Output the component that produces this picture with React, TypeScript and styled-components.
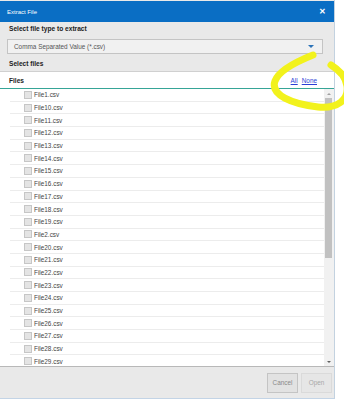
import styled, { createGlobalStyle } from "styled-components";

const GlobalStyle = createGlobalStyle`
  html, body {
    margin: 0;
    padding: 0;
    background: #ffffff;
  }
  body {
    font-family: "Liberation Sans", Arial, sans-serif;
  }
`;

const Page = styled.div`
  position: relative;
  width: 344px;
  height: 400px;
  overflow: hidden;
`;

const Dialog = styled.div`
  width: 334px;
  height: 398px;
  border-right: 1px solid #c3d2e0;
  border-bottom: 1px solid #c3d4e6;
  display: flex;
  flex-direction: column;
  background: #e9e9e9;
`;

const TitleBar = styled.div`
  height: 21px;
  margin-top: 1px;
  background: #0a6ec4;
  display: flex;
  align-items: center;
  justify-content: space-between;
  padding: 0 8px 0 7px;
  color: #ffffff;
`;

const Title = styled.span`
  font-size: 6px;
`;

const Close = styled.span`
  font-size: 8px;
  font-weight: bold;
`;

const Label = styled.div`
  height: 14px;
  line-height: 14px;
  padding-left: 9px;
  font-size: 6.6px;
  font-weight: bold;
  color: #222;
`;

const SelectBox = styled.div`
  height: 13px;
  margin: 3px 11px 3px 7px;
  border: 1px solid #c4c4c4;
  background: #f1f1f1;
  display: flex;
  align-items: center;
  justify-content: space-between;
  padding: 0 8px 0 6px;
  font-size: 6.4px;
  color: #555;
`;

const Caret = styled.span`
  width: 0;
  height: 0;
  border-left: 3px solid transparent;
  border-right: 3px solid transparent;
  border-top: 3px solid #2c73b8;
`;

const Panel = styled.div`
  flex: 1;
  display: flex;
  flex-direction: column;
  background: #ffffff;
  border-top: 1px solid #d0d0d0;
  border-bottom: 1px solid #b8b8b8;
  min-height: 0;
`;

const PanelHead = styled.div`
  height: 16px;
  display: flex;
  align-items: center;
  justify-content: space-between;
  padding: 0 17px 0 9px;
  border-bottom: 1px solid #36a597;
  font-size: 6.6px;
`;

const HeadTitle = styled.span`
  font-weight: bold;
  color: #222;
`;

const Links = styled.span`
  display: flex;
  gap: 4px;
`;

const Link = styled.a`
  color: #2a3fd6;
  text-decoration: underline;
  font-size: 6.4px;
`;

const ListArea = styled.div`
  flex: 1;
  display: flex;
  min-height: 0;
`;

const Rows = styled.div`
  flex: 1;
  overflow: hidden;
  padding-left: 10px;
`;

const Row = styled.div`
  height: 11.7px;
  border-bottom: 1px solid #ececec;
  display: flex;
  align-items: center;
  padding-left: 14px;
  gap: 2px;
  font-size: 6.4px;
  color: #444;
  &:last-child {
    border-bottom: none;
  }
`;

const Check = styled.span`
  width: 6px;
  height: 6px;
  border: 1px solid #c6c6c6;
  background: #e4e4e4;
`;

const Scrollbar = styled.div`
  width: 10px;
  display: flex;
  flex-direction: column;
  background: #f1f1f1;
`;

const Arrow = styled.div<{ $down?: boolean }>`
  height: 9px;
  display: flex;
  align-items: center;
  justify-content: center;
  &::after {
    content: "";
    border-left: 2px solid transparent;
    border-right: 2px solid transparent;
    ${(p) =>
      p.$down
        ? "border-top: 2px solid #606060;"
        : "border-bottom: 2px solid #a0a0a0;"}
  }
`;

const Track = styled.div`
  flex: 1;
  padding: 0 2px 0 1px;
`;

const Thumb = styled.div`
  height: 160px;
  background: #c1c1c1;
`;

const Footer = styled.div`
  height: 31px;
  display: flex;
  align-items: center;
  justify-content: flex-end;
  gap: 3px;
  padding-right: 2px;
`;

const Button = styled.button<{ $faded?: boolean }>`
  width: 31px;
  height: 20px;
  padding: 0;
  border: 1px solid ${(p) => (p.$faded ? "#dadada" : "#c4c4c4")};
  background: ${(p) => (p.$faded ? "#e6e6e6" : "#e2e2e2")};
  color: ${(p) => (p.$faded ? "#a8a8a8" : "#8a8a8a")};
  font-family: "Liberation Sans", Arial, sans-serif;
  font-size: 6.4px;
`;

const Highlight = styled.svg`
  position: absolute;
  left: 0;
  top: 0;
  pointer-events: none;
`;

const files = [
  "File1.csv",
  ...Array.from({ length: 10 }, (_, i) => `File1${i}.csv`),
  "File2.csv",
  ...Array.from({ length: 10 }, (_, i) => `File2${i}.csv`),
];

export default function App() {
  return (
    <Page>
      <GlobalStyle />
      <Dialog>
        <TitleBar>
          <Title>Extract File</Title>
          <Close>✕</Close>
        </TitleBar>
        <Label>Select file type to extract</Label>
        <SelectBox>
          Comma Separated Value (*.csv)
          <Caret />
        </SelectBox>
        <Label>Select files</Label>
        <Panel>
          <PanelHead>
            <HeadTitle>Files</HeadTitle>
            <Links>
              <Link>All</Link>
              <Link>None</Link>
            </Links>
          </PanelHead>
          <ListArea>
            <Rows>
              {files.map((f) => (
                <Row key={f}>
                  <Check />
                  {f}
                </Row>
              ))}
            </Rows>
            <Scrollbar>
              <Arrow />
              <Track>
                <Thumb />
              </Track>
              <Arrow $down />
            </Scrollbar>
          </ListArea>
        </Panel>
        <Footer>
          <Button>Cancel</Button>
          <Button $faded>Open</Button>
        </Footer>
      </Dialog>
      <Highlight width="344" height="400" viewBox="0 0 344 400">
        <path
          d="M313 55 C298 61 279 70 275 81 C270 95 292 104 318 107 C337 109 349 100 347 86 C346 77 339 70 331 65"
          fill="none"
          stroke="#f2f21c"
          strokeWidth="7"
          strokeLinecap="round"
        />
      </Highlight>
    </Page>
  );
}
